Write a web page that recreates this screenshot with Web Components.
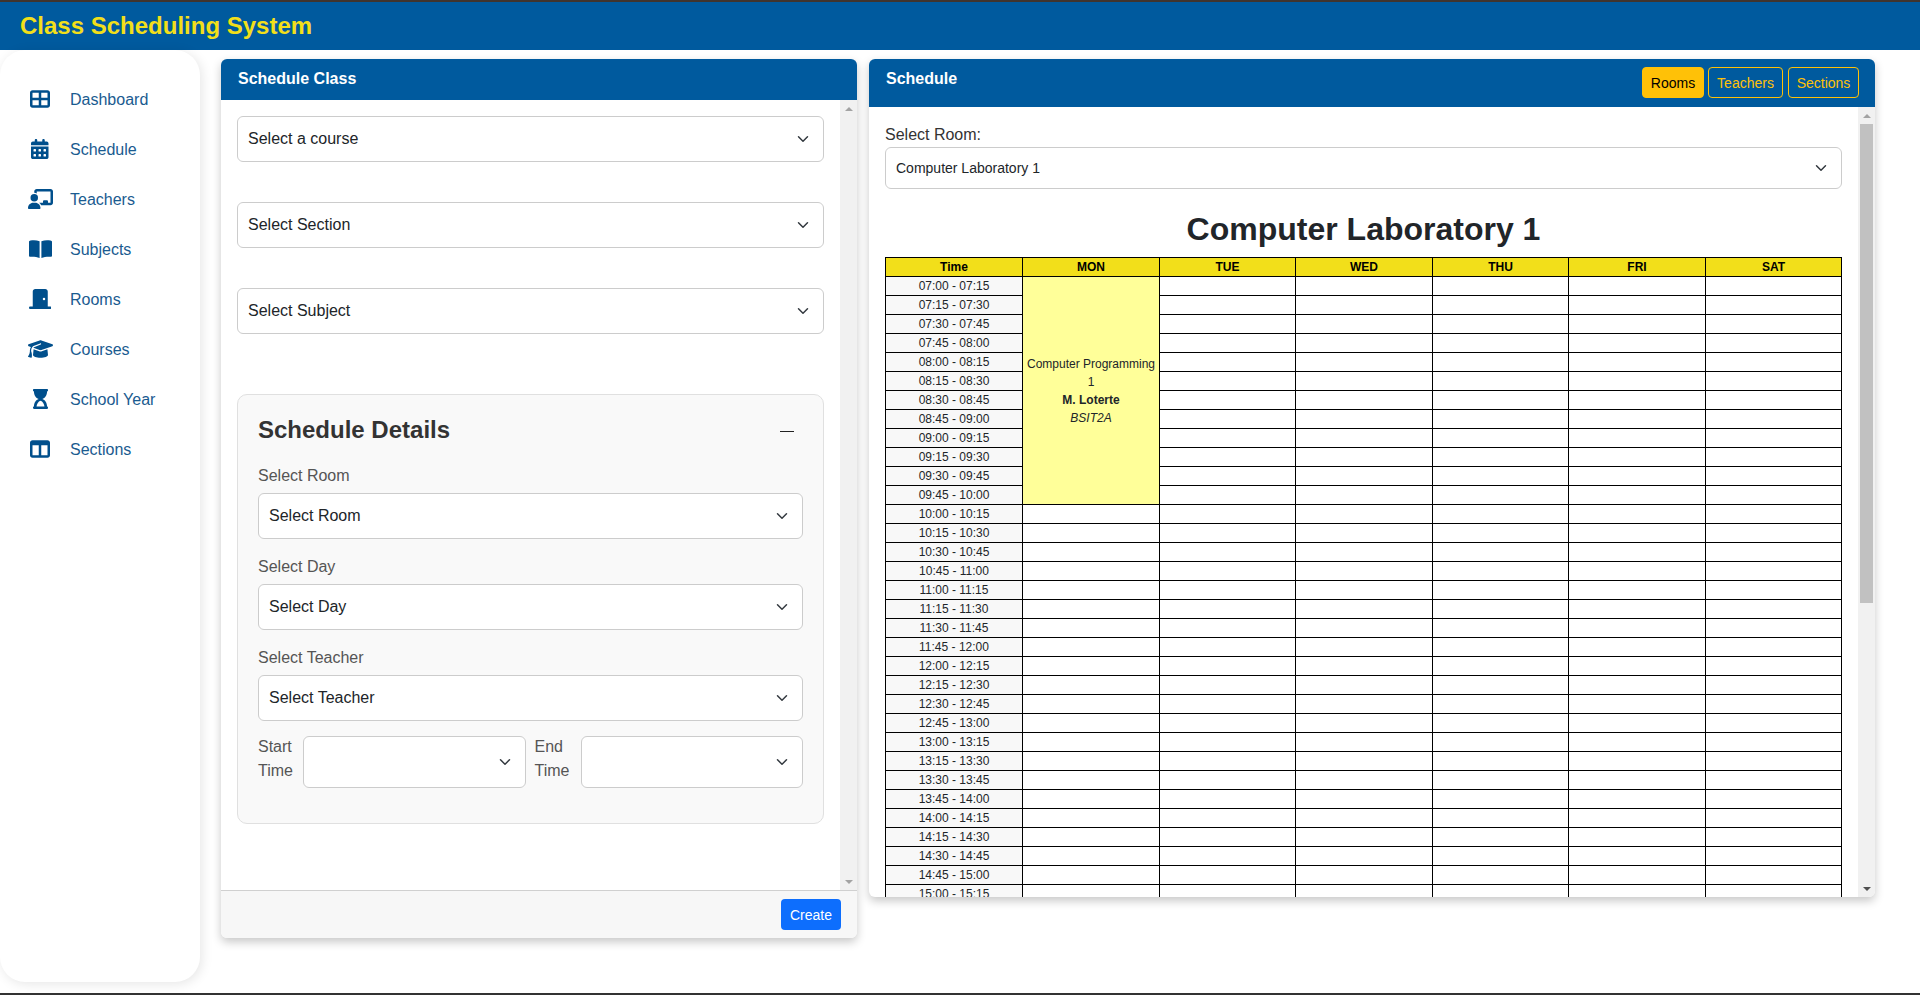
<!DOCTYPE html>
<html lang="en"><head><meta charset="utf-8"><title>Class Scheduling System</title>
<style>
html,body{margin:0;padding:0;height:995px;overflow:hidden;background:#fff;font-family:"Liberation Sans",Arial,sans-serif;font-size:16px;color:#212529}
</style></head><body>
<app-shell>
  <app-header slot="header">Class Scheduling System</app-header>
  <side-nav slot="nav">
    <nav-item icon="dashboard">Dashboard</nav-item>
    <nav-item icon="calendar">Schedule</nav-item>
    <nav-item icon="teacher">Teachers</nav-item>
    <nav-item icon="book">Subjects</nav-item>
    <nav-item icon="door">Rooms</nav-item>
    <nav-item icon="cap">Courses</nav-item>
    <nav-item icon="hourglass">School Year</nav-item>
    <nav-item icon="columns">Sections</nav-item>
  </side-nav>
  <class-form slot="left"></class-form>
  <schedule-view slot="right"></schedule-view>
</app-shell>
<script>
function shadow(el, html){ el.attachShadow({mode:'open'}).innerHTML = html; }
const ICONS = {
 dashboard:['0 0 512 512','M448 96V224H288V96H448zm0 192V416H288V288H448zM224 224H64V96H224V224zM64 288H224V416H64V288zM64 32C28.7 32 0 60.7 0 96V416c0 35.3 28.7 64 64 64H448c35.3 0 64-28.7 64-64V96c0-35.3-28.7-64-64-64H64z'],
 calendar:['0 0 448 512','M128 0c17.7 0 32 14.3 32 32V64H288V32c0-17.7 14.3-32 32-32s32 14.3 32 32V64h48c26.5 0 48 21.5 48 48v48H0V112C0 85.5 21.5 64 48 64H96V32c0-17.7 14.3-32 32-32zM0 192H448V464c0 26.5-21.5 48-48 48H48c-26.5 0-48-21.5-48-48V192zm64 80v32c0 8.8 7.2 16 16 16h32c8.8 0 16-7.2 16-16V272c0-8.8-7.2-16-16-16H80c-8.8 0-16 7.2-16 16zm128 0v32c0 8.8 7.2 16 16 16h32c8.8 0 16-7.2 16-16V272c0-8.8-7.2-16-16-16H208c-8.8 0-16 7.2-16 16zm144-16c-8.8 0-16 7.2-16 16v32c0 8.8 7.2 16 16 16h32c8.8 0 16-7.2 16-16V272c0-8.8-7.2-16-16-16H336zM64 400v32c0 8.8 7.2 16 16 16h32c8.8 0 16-7.2 16-16V400c0-8.8-7.2-16-16-16H80c-8.8 0-16 7.2-16 16zm144-16c-8.8 0-16 7.2-16 16v32c0 8.8 7.2 16 16 16h32c8.8 0 16-7.2 16-16V400c0-8.8-7.2-16-16-16H208zm112 16v32c0 8.8 7.2 16 16 16h32c8.8 0 16-7.2 16-16V400c0-8.8-7.2-16-16-16H336c-8.8 0-16 7.2-16 16z'],
 teacher:['0 0 640 512','M160 64c0-35.3 28.7-64 64-64H576c35.3 0 64 28.7 64 64V352c0 35.3-28.7 64-64 64H336.8c-11.8-25.5-29.9-47.5-52.4-64H384V320c0-17.7 14.3-32 32-32h64c17.7 0 32 14.3 32 32v32h64V64L224 64v49.1C205.2 102.2 183.3 96 160 96V64zm0 64a96 96 0 1 1 0 192 96 96 0 1 1 0-192zM133.3 352h53.3C260.3 352 320 411.7 320 485.3c0 14.7-11.9 26.7-26.7 26.7H26.7C11.9 512 0 500.1 0 485.3C0 411.7 59.7 352 133.3 352z'],
 book:['0 -1 23 20','M1.5 0.6C4.5 0 8 0.2 10.6 1.3V18C8 16.8 4.5 16.5 0.9 16.7 0.4 16.7 0 16.4 0 15.9V2C0 1.2 0.6 0.7 1.5 0.6zM21.5 0.6C18.5 0 15 0.2 12.4 1.3V18C15 16.8 18.5 16.5 22.1 16.7 22.6 16.7 23 16.4 23 15.9V2C23 1.2 22.4 0.7 21.5 0.6z'],
 door:['0 0 576 512','M96 64c0-35.3 28.7-64 64-64H416c35.3 0 64 28.7 64 64V448h64c17.7 0 32 14.3 32 32s-14.3 32-32 32H432 144 32c-17.7 0-32-14.3-32-32s14.3-32 32-32H96V64zM384 288a32 32 0 1 0 0-64 32 32 0 1 0 0 64z'],
 cap:['0 0 640 512','M320 32c-8.1 0-16.1 1.4-23.7 4.1L15.8 137.4C6.3 140.9 0 149.9 0 160s6.3 19.1 15.8 22.6l57.9 20.9C57.3 229.3 48 259.8 48 291.9v28.1c0 28.4-10.8 57.7-22.3 80.8c-6.5 13-13.9 25.8-22.5 37.6C0 442.7-.9 448.3 .9 453.4s6 8.9 11.2 10.2l64 16c4.2 1.1 8.7 .3 12.4-2s6.3-6.1 7.1-10.4c8.6-42.8 4.3-81.2-2.1-108.7C90.3 344.3 86 329.8 80 316.5V291.9c0-30.2 10.2-58.7 27.9-81.5c12.9-15.5 29.6-28 49.2-35.7l157-61.7c8.2-3.2 17.5 .8 20.7 9s-.8 17.5-9 20.7l-157 61.7c-12.4 4.9-23.3 12.4-32.2 21.6l159.6 57.6c7.6 2.7 15.6 4.1 23.7 4.1s16.1-1.4 23.7-4.1L624.2 182.6c9.5-3.4 15.8-12.5 15.8-22.6s-6.3-19.1-15.8-22.6L343.7 36.1C336.1 33.4 328.1 32 320 32zM128 408c0 35.3 86 72 192 72s192-36.7 192-72L496.7 262.6 354.5 314c-11.1 4-22.8 6-34.5 6s-23.5-2-34.5-6L143.3 262.6 128 408z'],
 hourglass:['0 0 384 512','M360 64c13.255 0 24-10.745 24-24V24c0-13.255-10.745-24-24-24H24C10.745 0 0 10.745 0 24v16c0 13.255 10.745 24 24 24 0 90.965 51.016 167.734 120.842 192C75.016 280.266 24 357.035 24 448c-13.255 0-24 10.745-24 24v16c0 13.255 10.745 24 24 24h336c13.255 0 24-10.745 24-24v-16c0-13.255-10.745-24-24-24 0-90.965-51.016-167.734-120.842-192C308.984 231.734 360 154.965 360 64zM192 300C135 318 96 382 90 448H294C288 382 249 318 192 300z'],
 columns:['0 0 512 512','M0 96C0 60.7 28.7 32 64 32H448c35.3 0 64 28.7 64 64V416c0 35.3-28.7 64-64 64H64c-35.3 0-64-28.7-64-64V96zm64 64V416H224V160H64zm384 0H288V416H448V160z']
};
customElements.define('app-shell', class extends HTMLElement{ constructor(){super(); shadow(this,`<style>
:host{display:flex;flex-direction:column;height:995px;overflow:hidden}
.top{height:2px;background:#40342e;flex:none}
.main{flex:1;display:flex;align-items:flex-start;min-height:0}
.nav{flex:none;width:200px}
.left{flex:none;margin:9px 0 0 21px}
.right{flex:none;margin:9px 0 0 12px}
.end{height:2px;background:#333;flex:none}
</style><div class="top"></div><slot name="header"></slot>
<div class="main"><div class="nav"><slot name="nav"></slot></div><div class="left"><slot name="left"></slot></div><div class="right"><slot name="right"></slot></div></div>
<div class="end"></div>`);}});
customElements.define('app-header', class extends HTMLElement{ constructor(){super(); shadow(this,`<style>
:host{display:flex;align-items:center;height:48px;flex:none;background:#005a9e;color:#f2df1a;font-weight:700;font-size:24px;padding-left:20px}
</style><slot></slot>`);}});
customElements.define('side-nav', class extends HTMLElement{ constructor(){super(); shadow(this,`<style>
:host{display:flex;flex-direction:column;box-sizing:border-box;width:200px;height:932px;padding-top:24px;background:#fff;border-radius:25px;box-shadow:2px 2px 12px rgba(0,0,0,.1)}
</style><slot></slot>`);}});
customElements.define('nav-item', class extends HTMLElement{ constructor(){super(); const [vb,d]=ICONS[this.getAttribute('icon')]; shadow(this,`<style>
:host{display:flex;align-items:center;height:50px;color:#1a5b90;font-size:16px}
.i{width:30px;margin:0 15px 0 25px;display:flex;justify-content:center}
svg{height:20px;display:block;fill:#004f8c}
.l{padding-top:2px}
</style><span class="i"><svg viewBox="${vb}" aria-hidden="true"><path d="${d}" fill-rule="evenodd"/></svg></span><span class="l"><slot></slot></span>`);}});
customElements.define('ui-select', class extends HTMLElement{ constructor(){super(); shadow(this,`<style>
:host{display:flex;align-items:center;box-sizing:border-box;height:46px;border:1px solid #ccc;border-radius:6px;background:#fff;padding:0 14px 0 10px;color:#212529;font-size:16px;white-space:nowrap}
:host([small]){height:42px;font-size:14px}
.t{flex:1;min-width:0;padding-bottom:1px}
svg{width:12px;height:12px;flex:none;display:block}
</style><span class="t"><slot></slot></span><svg viewBox="0 0 16 16"><path d="m2 5 6 6 6-6" fill="none" stroke="#343a40" stroke-width="2" stroke-linecap="round" stroke-linejoin="round"/></svg>`);}});
customElements.define('fake-scrollbar', class extends HTMLElement{ constructor(){super(); shadow(this,`<style>
:host{display:flex;flex-direction:column;flex:none;width:17px;background:#f1f1f1}
.a{height:17px;flex:none;display:flex;align-items:center;justify-content:center}
.a i{display:block;width:0;height:0;border-left:4px solid transparent;border-right:4px solid transparent}
.u i{border-bottom:4px solid var(--up,#a3a3a3)}
.d i{border-top:4px solid var(--down,#a3a3a3)}
.track{flex:1;min-height:0;display:flex;justify-content:center}
.thumb{width:13px;background:#c1c1c1;height:var(--thumb,0)}
</style><div class="a u"><i></i></div><div class="track"><div class="thumb"></div></div><div class="a d"><i></i></div>`);}});
customElements.define('panel-card', class extends HTMLElement{ constructor(){super(); shadow(this,`<style>
:host{display:flex;flex-direction:column;box-sizing:border-box;background:#fff;border-radius:6px;overflow:hidden;box-shadow:0 4px 10px rgba(0,0,0,.22)}
</style><slot></slot>`);}});
customElements.define('class-form', class extends HTMLElement{ constructor(){super(); shadow(this,`<style>
:host{display:block;width:636px;height:879px}
panel-card{height:100%}
.head{height:41px;box-sizing:border-box;flex:none;background:#005a9e;color:#fff;font-weight:700;font-size:16px;padding:0 16px 2px 17px;display:flex;align-items:center}
.mid{flex:1;min-height:0;display:flex}
.body{flex:1;min-width:0;box-sizing:border-box;padding:16px 16px 0;overflow:hidden}
ui-select.m{margin-bottom:40px}
.details{box-sizing:border-box;margin-top:60px;height:430px;border:1px solid #e0e0e0;border-radius:10px;background:#f9f9f9;padding:20px}
.dh{display:flex;align-items:center;justify-content:space-between;height:29px;margin-bottom:20px}
h2{margin:0;font-size:24px;line-height:29px;font-weight:700;color:#333}
.minus{width:14px;height:1px;background:#222;margin:3px 9px 0 0}
label{display:block;color:#555;line-height:24px;margin-bottom:5px}
.gap{margin-bottom:16px}
.gap.last{margin-bottom:15px}
.times{display:flex;gap:9px}
.times label{width:36px;flex:none;margin:-1px 0 0}
.times label.e{width:37px}
.times ui-select{flex:1;height:52px;min-width:0}
.foot{height:48px;box-sizing:border-box;flex:none;background:#f7f7f7;border-top:1px solid #d0d0d0;display:flex;justify-content:flex-end;align-items:flex-start;padding:8px 16px 0}
button{font:14px "Liberation Sans",Arial,sans-serif;color:#fff;background:#0d6efd;border:0;border-radius:4px;height:31px;width:60px;padding:0}
</style><panel-card><div class="head">Schedule Class</div>
<div class="mid"><div class="body">
<ui-select class="m">Select a course</ui-select>
<ui-select class="m">Select Section</ui-select>
<ui-select>Select Subject</ui-select>
<div class="details"><div class="dh"><h2>Schedule Details</h2><span class="minus"></span></div>
<label>Select Room</label><ui-select class="gap">Select Room</ui-select>
<label>Select Day</label><ui-select class="gap">Select Day</ui-select>
<label>Select Teacher</label><ui-select class="gap last">Select Teacher</ui-select>
<div class="times"><label>Start Time</label><ui-select></ui-select><label class="e">End Time</label><ui-select></ui-select></div>
</div></div><fake-scrollbar></fake-scrollbar></div>
<div class="foot"><button>Create</button></div></panel-card>`);}});
customElements.define('time-table', class extends HTMLElement{ constructor(){super();
 const p=n=>String(n).padStart(2,'0'); let rows='';
 const fmt=m=>p(Math.floor(m/60))+':'+p(m%60);
 for(let i=0;i<33;i++){ const s=420+i*15; let cells='';
   if(i===0) cells+=`<td class="cls" rowspan="12">Computer Programming 1<br><b>M. Loterte</b><br><i>BSIT2A</i></td>`;
   else if(i>=12) cells+='<td></td>';
   cells+='<td></td><td></td><td></td><td></td><td></td>';
   rows+=`<tr><td class="t">${fmt(s)} - ${fmt(s+15)}</td>${cells}</tr>`; }
 shadow(this,`<style>
:host{display:block}
table{border-collapse:collapse;table-layout:fixed;width:956px;font-size:12px;line-height:18px;color:#212529;text-align:center}
th,td{border:1px solid #000;padding:0 4px;height:18px;box-sizing:content-box;vertical-align:middle}
th{background:#f2df1a;color:#000;font-weight:700}
.t{background:#f8f8f8}
td.cls{background:#ffff99;padding:0 2px}
</style><table><colgroup><col style="width:137px"><col style="width:137px"><col style="width:136px"><col style="width:137px"><col style="width:136px"><col style="width:137px"><col style="width:136px"></colgroup><thead><tr><th>Time</th><th>MON</th><th>TUE</th><th>WED</th><th>THU</th><th>FRI</th><th>SAT</th></tr></thead><tbody>${rows}</tbody></table>`);}});
customElements.define('schedule-view', class extends HTMLElement{ constructor(){super(); shadow(this,`<style>
:host{display:block;width:1006px;height:838px}
panel-card{height:100%}
.head{height:48px;box-sizing:border-box;flex:none;background:#005a9e;color:#fff;font-weight:700;font-size:16px;padding:0 16px 0 17px;display:flex;justify-content:space-between;align-items:flex-start}
.ttl{line-height:18px;margin-top:11px}
.btns{display:flex;margin-top:8px}
.b{box-sizing:border-box;height:31px;border:1px solid #ffc107;border-radius:4px;color:#ffc107;font-weight:400;font-size:14px;line-height:30px;text-align:center}
.b.on{background:#ffc107;color:#000;width:62px}
.b.t{width:75px;margin:0 5px 0 4px}
.b.s{width:71px}
.mid{flex:1;min-height:0;display:flex}
.body{flex:1;min-width:0;overflow:hidden;box-sizing:border-box;padding:15px 16px 0}
.lab{line-height:24px;color:#333;padding-top:1px}
h1{margin:21px 0 9px;font-size:32px;line-height:38px;font-weight:700;text-align:center;color:#212529}
fake-scrollbar{--thumb:479px;--down:#505050}
</style><panel-card><div class="head"><span class="ttl">Schedule</span><div class="btns"><span class="b on">Rooms</span><span class="b t">Teachers</span><span class="b s">Sections</span></div></div>
<div class="mid"><div class="body"><div class="lab">Select Room:</div><ui-select small>Computer Laboratory 1</ui-select>
<h1>Computer Laboratory 1</h1><time-table></time-table></div><fake-scrollbar></fake-scrollbar></div></panel-card>`);}});
</script>
</body></html>
